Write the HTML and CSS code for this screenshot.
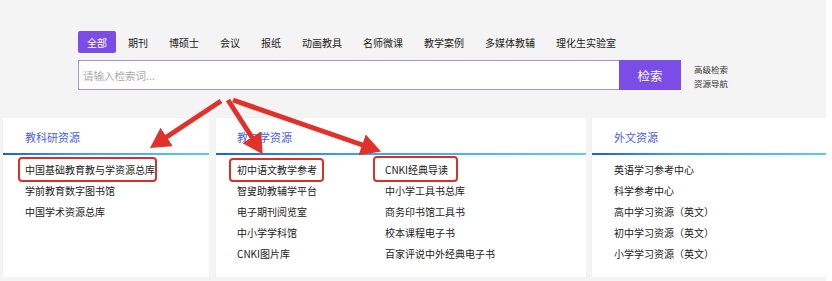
FILE: index.html
```html
<!DOCTYPE html>
<html>
<head>
    <meta charset="utf-8">
    <title>资源检索</title>
    <link rel="stylesheet" href="styles.css">
</head>
<body>
    <div class="page">
        <div class="search-area">
            <div class="tabs">
                <span class="tab active">全部</span>
                <span class="tab">期刊</span>
                <span class="tab">博硕士</span>
                <span class="tab">会议</span>
                <span class="tab">报纸</span>
                <span class="tab">动画教具</span>
                <span class="tab">名师微课</span>
                <span class="tab">教学案例</span>
                <span class="tab">多媒体教辅</span>
                <span class="tab">理化生实验室</span>
            </div>
            <div class="search-row">
                <input class="search-input" type="text" placeholder="请输入检索词...">
                <button class="search-btn">检索</button>
                <div class="search-links">
                    <a>高级检索</a>
                    <a>资源导航</a>
                </div>
            </div>
        </div>

        <div class="cards">
            <div class="card card-research">
                <h3 class="card-title">教科研资源</h3>
                <ul class="card-list">
                    <li>中国基础教育教与学资源总库</li>
                    <li>学前教育数字图书馆</li>
                    <li>中国学术资源总库</li>
                </ul>
            </div>
            <div class="card card-teach">
                <h3 class="card-title">教与学资源</h3>
                <ul class="card-list two-col">
                    <li>初中语文教学参考</li>
                    <li>CNKI经典导读</li>
                    <li>智叟助教辅学平台</li>
                    <li>中小学工具书总库</li>
                    <li>电子期刊阅览室</li>
                    <li>商务印书馆工具书</li>
                    <li>中小学学科馆</li>
                    <li>校本课程电子书</li>
                    <li>CNKI图片库</li>
                    <li>百家评说中外经典电子书</li>
                </ul>
            </div>
            <div class="card card-foreign">
                <h3 class="card-title">外文资源</h3>
                <ul class="card-list">
                    <li>英语学习参考中心</li>
                    <li>科学参考中心</li>
                    <li>高中学习资源（英文）</li>
                    <li>初中学习资源（英文）</li>
                    <li>小学学习资源（英文）</li>
                </ul>
            </div>
        </div>

        <!-- red annotation marks drawn over the page -->
        <svg class="marks" width="832" height="281" viewBox="0 0 832 281">
            <defs>
                <marker id="head" markerUnits="userSpaceOnUse" markerWidth="20" markerHeight="22" refX="2" refY="11" orient="auto">
                    <path d="M0,0 L20,11 L0,22 z" fill="#e0322a"/>
                </marker>
            </defs>
            <line x1="221" y1="101" x2="165" y2="138" stroke="#e0322a" stroke-width="5" marker-end="url(#head)"/>
            <line x1="228" y1="100" x2="253" y2="139" stroke="#e0322a" stroke-width="5" marker-end="url(#head)"/>
            <line x1="233" y1="100" x2="364" y2="145.5" stroke="#e0322a" stroke-width="5" marker-end="url(#head)"/>
            <rect x="19" y="158" width="137" height="23" rx="3" fill="none" stroke="#d9302a" stroke-width="2"/>
            <rect x="230" y="159" width="93" height="22" rx="3" fill="none" stroke="#d9302a" stroke-width="2"/>
            <rect x="374" y="157" width="83" height="24" rx="3" fill="none" stroke="#d9302a" stroke-width="2"/>
        </svg>
    </div>
</body>
</html>
```

FILE: styles.css
```css
body {
    margin: 0;
    background: #ffffff;
    font-family: "Noto Sans CJK SC", "Liberation Sans", sans-serif;
    color: #333;
}
.page {
    position: relative;
    width: 826px;
    height: 281px;
    background: #f4f4f4;
    overflow: hidden;
}
.search-area {
    padding: 31px 0 0 78px;
}
.tabs {
    display: flex;
    gap: 3px;
    height: 22px;
}
.tab {
    display: flex;
    align-items: center;
    padding: 0 9px;
    font-size: 10px;
    color: #222;
}
.tab.active {
    background: #7b4de6;
    color: #fff;
    border-radius: 2px;
}
.search-row {
    display: flex;
    align-items: flex-start;
    margin-top: 7px;
}
.search-input {
    box-sizing: border-box;
    width: 541px;
    height: 30px;
    border: 1px solid #a48ee2;
    border-right: none;
    padding: 0 4px;
    font-family: inherit;
    font-size: 10.5px;
    outline: none;
}
.search-input::placeholder {
    color: #aaa;
}
.search-btn {
    width: 62px;
    height: 30px;
    border: none;
    background: #7b4de6;
    color: #fff;
    font-family: inherit;
    font-size: 12.5px;
}
.search-links {
    display: flex;
    flex-direction: column;
    margin: 2px 0 0 13px;
    font-size: 8.5px;
    line-height: 14px;
    color: #333;
}
.cards {
    display: flex;
    gap: 7px;
    margin: 28px 0 0 3px;
}
.card {
    background: #fff;
    height: 159px;
    box-shadow: 0 0 1px rgba(0,0,0,0.08);
}
.card-research { width: 206px; }
.card-teach { width: 370px; }
.card-foreign { width: 234px; margin-left: -1px; }
.card-title {
    margin: 0;
    height: 35px;
    line-height: 38px;
    padding-left: 22px;
    font-size: 11px;
    font-weight: normal;
    color: #4a62dc;
    border-bottom: 2px solid transparent;
    border-image: linear-gradient(to right, #1f60d2, #3f9fe4 35%, #5ccbef) 1;
}
.card-teach .card-title { padding-left: 21px; }
.card-list {
    list-style: none;
    margin: 0;
    padding: 4px 0 0 22px;
    font-size: 10px;
    line-height: 21px;
    color: #222;
}
.card-teach .card-list { padding-left: 21px; }
.two-col {
    display: grid;
    grid-template-columns: 148px auto;
}
.marks {
    position: absolute;
    left: 0;
    top: 0;
    pointer-events: none;
}
```
